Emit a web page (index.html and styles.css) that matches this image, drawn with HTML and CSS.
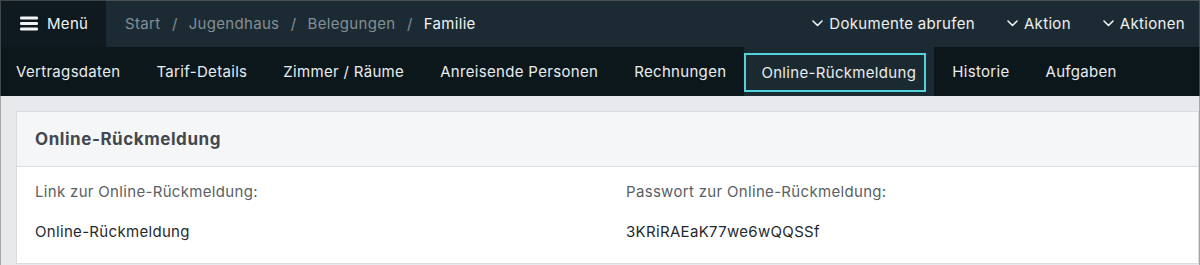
FILE: index.html
```html
<!DOCTYPE html>
<html lang="de">
<head>
<meta charset="utf-8">
<title>Online-Rückmeldung</title>
<link rel="stylesheet" href="styles.css">
</head>
<body>
<div class="frame">
  <header class="topbar">
    <button class="menu-btn">
      <svg class="burger" width="18" height="15" viewBox="0 0 18 15"><rect x="0" y="0.5" width="18" height="3" rx="1.2"/><rect x="0" y="6" width="18" height="3" rx="1.2"/><rect x="0" y="11.5" width="18" height="3" rx="1.2"/></svg>
      <span>Menü</span>
    </button>
    <nav class="crumbs">
      <a>Start</a><span class="sep">/</span><a>Jugendhaus</a><span class="sep">/</span><a>Belegungen</a><span class="sep">/</span><span class="current">Familie</span>
    </nav>
    <div class="actions">
      <span class="drop"><svg class="chev" width="11" height="7" viewBox="0 0 11 7"><path d="M1 1l4.5 4.5L10 1"/></svg>Dokumente abrufen</span>
      <span class="drop"><svg class="chev" width="11" height="7" viewBox="0 0 11 7"><path d="M1 1l4.5 4.5L10 1"/></svg>Aktion</span>
      <span class="drop"><svg class="chev" width="11" height="7" viewBox="0 0 11 7"><path d="M1 1l4.5 4.5L10 1"/></svg>Aktionen</span>
    </div>
  </header>
  <nav class="tabs">
    <a class="tab">Vertragsdaten</a>
    <a class="tab">Tarif-Details</a>
    <a class="tab">Zimmer / Räume</a>
    <a class="tab">Anreisende Personen</a>
    <a class="tab">Rechnungen</a>
    <a class="tab active"><span class="tab-inner">Online-Rückmeldung</span></a>
    <a class="tab">Historie</a>
    <a class="tab">Aufgaben</a>
  </nav>
  <main class="content">
    <section class="card">
      <div class="card-head">Online-Rückmeldung</div>
      <div class="card-body">
        <div class="field">
          <div class="label">Link zur Online-Rückmeldung:</div>
          <div class="value">Online-Rückmeldung</div>
        </div>
        <div class="field">
          <div class="label">Passwort zur Online-Rückmeldung:</div>
          <div class="value">3KRiRAEaK77we6wQQSSf</div>
        </div>
      </div>
    </section>
  </main>
</div>
</body>
</html>
```
FILE: styles.css
```css
* { box-sizing: border-box; }
html, body { margin: 0; padding: 0; }
body {
  font-family: Inter, "Noto Sans", "DejaVu Sans", sans-serif;
  font-size: 15px;
  letter-spacing: 0.32px;
  background: #e8e9ec;
  width: 1200px;
  height: 265px;
  overflow: hidden;
}
.frame {
  position: relative;
  height: 265px;
  background: #e8e9ec;
}
.frame::after {
  content: "";
  position: absolute;
  inset: 0 0 -2px 0;
  border: 1px solid rgba(110, 110, 110, 0.55);
  pointer-events: none;
}
.topbar {
  height: 47px;
  background: #1c2b33;
  display: flex;
  align-items: stretch;
  color: #eef0f1;
}
.menu-btn {
  width: 106px;
  border: 0;
  margin: 0;
  background: #0e1a1f;
  color: #f2f4f5;
  font: inherit;
  letter-spacing: inherit;
  display: flex;
  align-items: center;
  padding: 0 0 0 20px;
  gap: 9px;
}
.burger rect { fill: #f2f4f5; }
.crumbs {
  display: flex;
  align-items: center;
  padding-left: 19px;
  color: #838f94;
}
.crumbs .sep { margin: 0 11px 0 11.5px; }
.crumbs .current { color: #f1f3f4; }
.actions {
  margin-left: auto;
  display: flex;
  align-items: center;
  gap: 32px;
  padding-right: 15px;
}
.drop {
  display: flex;
  align-items: center;
  gap: 6px;
  color: #eef0f1;
}
.chev path {
  fill: none;
  stroke: #eef0f1;
  stroke-width: 1.6;
  stroke-linecap: round;
  stroke-linejoin: round;
}
.tabs {
  height: 49px;
  background: #0c171c;
  display: flex;
  align-items: stretch;
  padding-left: 16px;
}
.tab {
  display: flex;
  align-items: center;
  padding: 0 18px;
  color: #e9ecee;
  white-space: nowrap;
}
.tab:first-child { padding-left: 0; }
.tab.active {
  background: #1b2a31;
  padding: 6px 8px 4px 0;
  align-items: stretch;
}
.tab-inner {
  display: flex;
  align-items: center;
  border: 2px solid #52d2da;
  padding: 0 8px 0 15px;
}
.content {
  padding: 15px 1px 0 16px;
}
.card {
  background: #ffffff;
  border: 1px solid #dadbde;
}
.card-head {
  height: 55px;
  background: #f5f6f8;
  border-bottom: 1px solid #dcdde0;
  display: flex;
  align-items: center;
  padding-left: 18px;
  font-size: 17px;
  font-weight: 700;
  letter-spacing: 0.55px;
  color: #43484e;
}
.card-body {
  display: grid;
  grid-template-columns: 1fr 1fr;
  column-gap: 37px;
  padding: 14px 18px 20px 18px;
}
.label {
  line-height: 22px;
  color: #5a5f64;
}
.value {
  margin-top: 18px;
  line-height: 22px;
  color: #1f2a30;
}
```
